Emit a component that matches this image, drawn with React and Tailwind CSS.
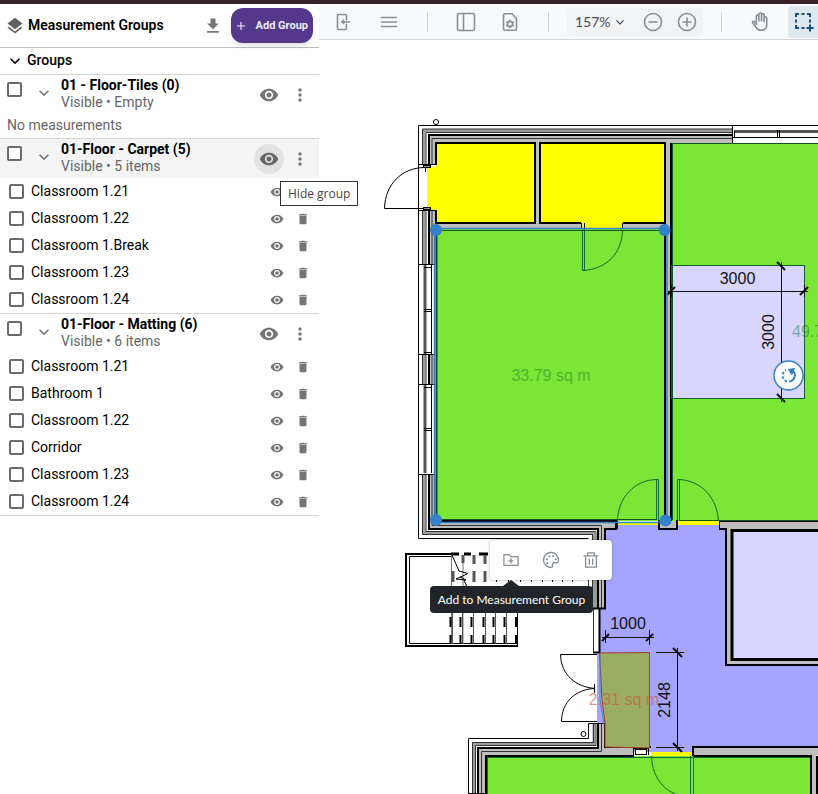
import React, { useState } from 'react';
import {
  MdAdd,
  MdDelete,
  MdExpandMore,
  MdGetApp,
  MdLayers,
  MdMoreVert,
  MdVisibility,
} from 'react-icons/md';

const groups = [
  { id: 'tiles', name: '01 - Floor-Tiles (0)', status: 'Visible • Empty', items: [] },
  {
    id: 'carpet',
    name: '01-Floor - Carpet (5)',
    status: 'Visible • 5 items',
    hovered: true,
    items: ['Classroom 1.21', 'Classroom 1.22', 'Classroom 1.Break', 'Classroom 1.23', 'Classroom 1.24'],
  },
  {
    id: 'matting',
    name: '01-Floor - Matting (6)',
    status: 'Visible • 6 items',
    items: ['Classroom 1.21', 'Bathroom 1', 'Classroom 1.22', 'Corridor', 'Classroom 1.23', 'Classroom 1.24'],
  },
];

const Checkbox = ({ id, label }) => (
  <input
    type="checkbox"
    id={id}
    aria-label={label}
    className="h-[15px] w-[15px] shrink-0 appearance-none rounded-[2px] border-2 border-[#6b6b6b] bg-white checked:bg-[#53388b]"
  />
);

const GroupItem = ({ id, name }) => (
  <li className="flex h-[27px] items-center pr-[9px] pl-[9px]">
    <Checkbox id={id} />
    <label htmlFor={id} className="ml-[7px] flex-1 pb-0.5 text-sm text-black">
      {name}
    </label>
    <div className="flex items-center gap-3 text-[#757575]">
      <button type="button" aria-label={`Hide ${name}`}>
        <MdVisibility size={14} />
      </button>
      <button type="button" aria-label={`Delete ${name}`}>
        <MdDelete size={14} />
      </button>
    </div>
  </li>
);

const Group = ({ group }) => {
  const [open, setOpen] = useState(true);

  return (
    <section className="border-b border-[#d5d5d5]">
      <div
        className={
          group.hovered
            ? 'flex h-[39px] items-start bg-[#f4f4f4] pr-[9px] pl-[7px]'
            : 'flex h-[39px] items-start pr-[9px] pl-[7px]'
        }
      >
        <div className="flex pt-[7px]">
          <Checkbox id={group.id} label={group.name} />
        </div>
        <button
          type="button"
          aria-label="Toggle group"
          onClick={() => setOpen(!open)}
          className="ml-3 pt-2 text-[#757575]"
        >
          <MdExpandMore size={20} />
        </button>
        <div className="ml-[7px] flex-1 pt-0.5 text-sm leading-[17px]">
          <h3 className="font-bold text-black">{group.name}</h3>
          <p className="text-[#666666]">{group.status}</p>
        </div>
        <div className="relative flex items-center gap-1.5 pt-[5px] text-[#757575]">
          <button
            type="button"
            aria-label="Hide group"
            className={
              group.hovered
                ? 'flex h-[30px] w-[30px] items-center justify-center rounded-full bg-[#e2e2e2] text-[#666666]'
                : 'flex h-[30px] w-[30px] items-center justify-center rounded-full'
            }
          >
            <MdVisibility size={20} />
          </button>
          <button type="button" aria-label="Group options">
            <MdMoreVert size={20} />
          </button>
          {group.hovered && (
            <div
              role="tooltip"
              className="absolute top-[42px] left-[26px] z-20 flex h-[25px] items-center border border-[#333333] bg-white px-[7px] font-['Open_Sans',sans-serif] text-xs whitespace-nowrap text-[#444444]"
            >
              Hide group
            </div>
          )}
        </div>
      </div>
      {open && group.items.length === 0 && (
        <p className="h-6 pl-[7px] text-sm leading-[22px] text-[#666666]">No measurements</p>
      )}
      {open && group.items.length > 0 && (
        <ul>
          {group.items.map((item, index) => (
            <GroupItem key={index} id={`${group.id}-${index}`} name={item} />
          ))}
        </ul>
      )}
    </section>
  );
};

const Sidebar = () => (
  <aside className="z-10 w-[319px] shrink-0 bg-white font-['Roboto',sans-serif]">
    <header className="flex h-11 items-center border-b border-[#bdbdbd] pr-1.5 pl-[5px]">
      <MdLayers size={20} className="text-[#616161]" />
      <h1 className="ml-[3px] flex-1 pb-0.5 text-sm font-semibold text-black">Measurement Groups</h1>
      <button type="button" aria-label="Download" className="mr-2 text-[#757575]">
        <MdGetApp size={20} />
      </button>
      <button
        type="button"
        className="flex h-[35px] w-[82px] items-center justify-between rounded-xl bg-[#53388b] pr-[5px] pl-[3px] text-[11px] font-bold whitespace-nowrap text-[#f0ebfa] shadow-md"
      >
        <MdAdd size={14} />
        <span className="pt-px">Add Group</span>
      </button>
    </header>
    <div className="flex h-[27px] items-center border-b border-[#d5d5d5] pl-[5px] text-black">
      <MdExpandMore size={20} />
      <h2 className="ml-0.5 pb-0.5 text-sm font-medium">Groups</h2>
    </div>
    {groups.map((group) => (
      <Group key={group.id} group={group} />
    ))}
  </aside>
);

const Icon = ({ children, size = 24 }) => (
  <svg
    width={size}
    height={size}
    viewBox="0 0 24 24"
    fill="none"
    stroke="currentColor"
    strokeWidth="1.6"
    strokeLinecap="round"
    strokeLinejoin="round"
  >
    {children}
  </svg>
);

const ToolButton = ({ label, children }) => (
  <button type="button" aria-label={label} className="flex h-8 w-8 shrink-0 items-center justify-center">
    {children}
  </button>
);

const Toolbar = () => (
  <div className="flex h-9 shrink-0 items-center overflow-hidden border-b border-[#ced4da] bg-[#f8f9fa] pl-2 text-[#868e96]">
    <div className="flex gap-3.5">
      <ToolButton label="Exit">
        <Icon>
          <path d="M15.500 9.800V5.500a1 1 0 0 0-1-1h-7a1 1 0 0 0-1 1v13a1 1 0 0 0 1 1h7a1 1 0 0 0 1-1v-4.300M18.500 12H11" />
          <path d="M13 9.700v4.600L10.200 12z" fill="currentColor" strokeWidth="0.500" />
        </Icon>
      </ToolButton>
      <ToolButton label="Menu">
        <Icon>
          <path d="M4.500 7.500h15M4.500 12h15M4.500 16.500h15" />
        </Icon>
      </ToolButton>
    </div>
    <div className="mx-[22px] h-5 w-px shrink-0 bg-[#ced4da]" />
    <div className="flex gap-3">
      <ToolButton label="Panels">
        <Icon>
          <rect x="3.500" y="3.500" width="17" height="17" rx="1.500" />
          <path d="M9.500 3.500v17" />
        </Icon>
      </ToolButton>
      <ToolButton label="Document settings">
        <Icon>
          <path d="M14 3.800H7A1.500 1.500 0 0 0 5.500 5.300v13.400A1.500 1.500 0 0 0 7 20.200h10a1.500 1.500 0 0 0 1.500-1.500V8.500z" />
          <circle cx="12" cy="14" r="2.600" />
          <path d="M12 10.400v.6M12 17v.6M8.900 12.200l.5.300M14.600 15.500l.5.300M8.900 15.800l.5-.3M14.600 12.500l.5-.3" />
        </Icon>
      </ToolButton>
    </div>
    <div className="mr-[18px] ml-[22px] h-5 w-px shrink-0 bg-[#ced4da]" />
    <div className="flex h-7 w-[136px] shrink-0 items-center rounded bg-[#f1f3f5] pl-2">
      <button
        type="button"
        className="flex w-[53px] items-center justify-between font-['Lato',sans-serif] text-sm text-[#485056]"
      >
        157%
        <Icon size={16}>
          <path d="m7 10 5 5 5-5" />
        </Icon>
      </button>
      <button type="button" aria-label="Zoom out" className="ml-[13px]">
        <Icon>
          <circle cx="12" cy="12" r="8.500" />
          <path d="M8 12h8" />
        </Icon>
      </button>
      <button type="button" aria-label="Zoom in" className="ml-2.5">
        <Icon>
          <circle cx="12" cy="12" r="8.500" />
          <path d="M8 12h8M12 8v8" />
        </Icon>
      </button>
    </div>
    <div className="mr-[22px] ml-[18px] h-5 w-px shrink-0 bg-[#ced4da]" />
    <div className="flex gap-3">
      <ToolButton label="Pan">
        <Icon>
          <path d="M8.300 14.500V6.400a1.300 1.300 0 0 1 2.600 0V11M10.900 11V4.300a1.300 1.300 0 0 1 2.600 0V11M13.500 11V4.900a1.300 1.300 0 0 1 2.600 0V11.500M16.100 8a1.300 1.300 0 0 1 2.600 0v6.500c0 3.500-2.200 5.800-5.500 5.800-2.600 0-4-1-5.300-3l-3.200-4.500c-.6-1 .8-2 1.700-1.200l1.900 2" />
        </Icon>
      </ToolButton>
      <button
        type="button"
        aria-label="Select area"
        className="flex h-8 w-10 shrink-0 items-center rounded bg-[#dde7ee] pl-1 text-[#1d4e79]"
      >
        <Icon>
          <path
            strokeWidth="2"
            strokeLinecap="butt"
            d="M4 7V4h3M9.500 4h3M15 4h3v3M18 9.500v3M4 9.500v3M4 15v3h3M9.500 18h3M18 14.500v7M14.500 18h7"
          />
        </Icon>
      </button>
    </div>
  </div>
);

// stair treads below the landing
const treads = [452, 462, 473, 485, 495, 506];

const FloorPlan = () => (
  <svg className="block h-full w-full" role="img" aria-label="Floor plan">
    <g transform="translate(-319 -40)" fill="none" stroke="#000">
      {/* corridor and rooms */}
      <g stroke="none">
        <path d="M606 525H830V752H606V723H597V652H600V609H606Z" fill="#a5a5ff" />
        <path d="M427 167H436V143H535V223H436V210H427Z" fill="#ffff00" />
        <path d="M541 143H665V223H623V229H581V223H541Z" fill="#ffff00" />
        <rect x="436" y="229" width="229" height="292" fill="#7ae635" />
        <rect x="671" y="143" width="159" height="378" fill="#7ae635" />
        <rect x="733" y="531" width="97" height="128" fill="#d8d6ff" />
        <rect x="486" y="756" width="325" height="60" fill="#7ae635" />
        <rect x="617" y="522" width="42" height="3" fill="#ffff00" />
        <rect x="678" y="521" width="41" height="4" fill="#ffff00" />
        <rect x="651" y="752" width="42" height="4" fill="#ffff00" />
      </g>

      {/* wall bodies */}
      <g stroke="none" fill="#bebebe">
        <path d="M428 134H732V143H436V165H428Z" />
        <rect x="428" y="210" width="8" height="54" />
        <rect x="428" y="355" width="6" height="29" />
        <path d="M428 474H436V522H617V529H606V608H598V529H428Z" />
        <rect x="535" y="143" width="6" height="81" />
        <path d="M436 224H581V228H436ZM623 224H665V228H623Z" />
        <rect x="665" y="143" width="6" height="378" />
        <rect x="659" y="521" width="18" height="8" />
        <path d="M719 521H830V530H732V659H830V665H726V530H719Z" />
        <path d="M598 723H606V748H633V755H486V816H478V748H598Z" />
        <rect x="693" y="748" width="137" height="7" />
        <rect x="811" y="755" width="6" height="60" />
      </g>
      <g stroke="#9c9c9c" strokeWidth="3">
        <path d="M732 130.500H424V165M424 210V264M424 355V384M424 474V533H593.500V608" />
        <path d="M594 723V743.500H474V816" />
      </g>

      {/* outer wall outlines */}
      <path d="M830 125.500H418.500V538.500H588.500" />
      <g stroke="#333">
        <path d="M732 129H422.500V165M422.500 210V264M422.500 355V384M422.500 474V534.500H592.500V608" />
        <path d="M732 132.500H426V165M426 210V264M426 355V384M426 474V531.500H596V608" />
        <path d="M732 138.500H432V165M432 210V264M432 355V384M432 474V525.500H601.500V608" />
        <path d="M588.500 540V608M593.500 609V653" />
        <path d="M593.500 723V742.500H472.500V816M596 723V745.500H475.500V816M601.500 723V751.500H481.500V816" />
      </g>
      <path d="M606 723.500H588.500V738.500H468.500V816M468 793.500H486" />
      <g strokeWidth="2">
        <path d="M732 135H429V165M429 210V264M429 355V384M429 474V529H598V608" />
        <path d="M436 165V143H535V223H436V210" />
        <path d="M581 223H540V143H665V223H623" />
        <path d="M671 521V143M665 223V521" />
        <path d="M605 608V529H616V521H436" />
        <path d="M659 520V529H677V520" />
        <path d="M598 723V748H478V816" />
        <path d="M605 723V747H651M486 816V756H634M693 756V747H830" />
        <path d="M811 816V756H693M817 816V756" />
      </g>
      <path d="M719 521H830M719 529H726V665H830" strokeWidth="2" />
      <path d="M830 659.500H732V530.500H830" strokeWidth="3" />
      <path d="M581.500 223V229M584.500 223V229M622.500 223V229M617.500 521V529M719.500 521V529M418 164.500H436M418 210.500H436" />
      <path d="M593 608.500H606M599.500 609V653M593 652.500H600" strokeWidth="2" />
      <path d="M633.500 748V755M648.500 748V755M634 748.500H648" />
      <rect x="635.500" y="749.500" width="11" height="5" fill="#fff" />

      {/* windows */}
      <path d="M425 265V354M425 385V473" stroke="#555" strokeWidth="3" />
      <path d="M734 131.500H830" stroke="#555" strokeWidth="3" />
      <path d="M431.500 265V354M431.500 385V473M418 264.500H434M418 354.500H434M418 384.500H434M418 474.500H434" />
      <path d="M424 309.500H431M424 311.500H431M424 428.500H431M424 430.500H431M424 267.500H431M424 352.500H431M424 387.500H431" />
      <path d="M732 137.500H830M732.500 125V143M734.500 131V138M777.500 130V138M779.500 130V138" />

      {/* exterior door and its frame */}
      <path d="M424 167.500C402 168 385 184 384.500 208.500H424M425.500 168V172" />
      <rect x="423.500" y="165.500" width="7" height="2" fill="#999" />
      <rect x="423.500" y="207.500" width="7" height="2" fill="#999" />
      <circle cx="436" cy="122" r="2.500" />
      <circle cx="583.500" cy="734" r="2.500" />

      {/* double door */}
      <path d="M597 654.500H560.500C561 675 576 687 595 688.500C576 689 561.500 702 561.500 721.500H597M594.500 684V693" />

      {/* right hand lavender mat */}
      <rect x="671.500" y="265.500" width="133" height="133" fill="#d8d6ff" stroke="#175e32" />

      {/* internal doors */}
      <g stroke="#0d6b34">
        <path d="M582.500 229V270.500H584.500V229M583 270.500C607 269 622 253 622.500 230" />
        <path d="M658.500 520V479.500H656.500V520M656.500 479.500C634 480 618 498 617.500 521" />
        <path d="M677.500 520V479.500H679.500V520M679.500 479.500C702 481 717 498 718.500 521" />
        <path d="M693.500 756V816M690.500 756V816M651.500 756C652 780 668 797 691 797" />
        <path d="M437 230.500H664M672.500 144V520M672 143.500H830M679 520.500H830M437 519.500H657" stroke="#125223" />
        <path d="M487.500 816V757.500H810" />
      </g>

      {/* stairs */}
      <path d="M451 554H406V646H518" strokeWidth="2" />
      <path d="M452 556.500H409.500V643.500H518M517.500 612V647" />
      <path d="M451 554H459M464 554H471M479 554H488" strokeWidth="3" />
      <path d="M451.500 555V644M463 555V644" stroke="#777" />
      <path
        d="M453 571V582M463 555V563M474 555V564M474 571V582M485 555V564M485 571V582"
        stroke="#555"
        strokeWidth="3"
      />
      <path d="M452 555L459 571L468 573.500L456 579L466 580L460 577M464 580L467 587" />
      <path d="M496.500 578V582M508.500 578V582M520.500 578V582M531.500 578V582M542.500 578V582M552.500 578V582M562.500 578V582M572.500 578V582" />
      {treads.map((x) => (
        <g key={x}>
          <path d={`M${x + 0.5} 612V644`} stroke="#555" />
          <path d={`M${x - 1.5} 617V627M${x - 1.5} 635V643`} strokeWidth="2" />
        </g>
      ))}
      <path d="M516 617V627M516 635V643" strokeWidth="2" />

      {/* doormat at the entrance */}
      <path d="M599.500 653L649.500 652.500V748L605 747V723L602 700Z" fill="#9bad62" stroke="#a5382b" />
      <path d="M600 654V700L604 724" stroke="#4a84a8" />
      <path d="M649.500 654V747" stroke="#33705c" />

      {/* dimension lines */}
      <g stroke="#111">
        <path d="M668 291.500H808M781.500 262V402" />
        <path d="M667 295L675 287M800 295L808 287M777 262L785 270M777 394L785 402" strokeWidth="2" />
        <path d="M671.500 285V297M804.500 285V297" />
        <path d="M602 637.500H654M605.500 630V643M649.500 630V645M677.500 648V751M656 652.500H684M656 747.500H684" />
        <path d="M602 641L609 634M646 641L653 634M673 648L682 657M673 743L682 752" strokeWidth="2" />
      </g>
      <g
        stroke="none"
        fill="#111"
        textAnchor="middle"
        className="font-['Liberation_Sans',sans-serif] text-base"
      >
        <text x="737.500" y="284">3000</text>
        <text transform="translate(774 332) rotate(-90)">3000</text>
        <text x="628" y="629">1000</text>
        <text transform="translate(670 700) rotate(-90)">2148</text>
        <text x="551" y="381" fill="#14822880">33.79 sq m</text>
        <text x="792" y="337" textAnchor="start" fill="#14822880">49.79 sq m</text>
        <text x="624" y="705" fill="#d0503f99">2.31 sq m</text>
      </g>

      {/* selected area with its handles */}
      <path d="M434.500 230V520M436 228.500H665M436 522.500H666M667 230V520" stroke="#3381c8" strokeWidth="1.500" />
      <path d="M436.500 231V519" stroke="#0b4a30" strokeWidth="2" />
      <g fill="#3381c8" stroke="none">
        <circle cx="436" cy="230" r="6" />
        <circle cx="664.500" cy="230" r="6" />
        <circle cx="436" cy="520" r="6" />
        <circle cx="665.500" cy="520.500" r="6" />
      </g>
      <circle cx="788.500" cy="375.500" r="14.500" fill="#fff" stroke="#3381c8" strokeWidth="1.500" />
      <g stroke="#3381c8" strokeWidth="2">
        <path d="M792.500 370.500A6.200 6.200 0 0 1 789 381.500" />
        <path d="M787 381.500A6.200 6.200 0 0 1 786 370" strokeDasharray="2.500 2" />
        <path d="M795 368.500L788.500 369.500L792 375" fill="#3381c8" strokeWidth="1" />
      </g>
    </g>
  </svg>
);

const SelectionPopup = () => (
  <div className="absolute top-[500px] left-[171px] flex h-10 w-[122px] items-center justify-between rounded bg-white px-[11px] text-[#868e96] shadow-[0_0_3px_rgba(0,0,0,0.35)]">
    <button type="button" aria-label="Add to Measurement Group">
      <Icon size={20}>
        <path d="M3.500 18.500V5.500h6l2 2.500h9v10.500zM12 10.500v5M9.500 13h5" />
      </Icon>
    </button>
    <button type="button" aria-label="Style">
      <Icon size={20}>
        <path d="M12 3a9 9 0 1 0 0 18c1.500 0 2-1 1.800-2.200-.3-1.500-.4-3.300 1.700-3.600 2-.2 3.500.8 4.700-.4C21.800 13 20.500 3 12 3z" />
        <path d="M10 7.500h.1M14.500 7.500h.1M7 11h.1M7.500 15.500h.1M17.500 11h.1" strokeWidth="2.500" />
      </Icon>
    </button>
    <button type="button" aria-label="Delete">
      <Icon size={20}>
        <path d="M3.500 7h17M8 7V3.500h8V7M5.500 7v13.500h13V7M10 11v6M14 11v6" />
      </Icon>
    </button>
    <div
      role="tooltip"
      className="absolute top-[46px] -left-[60px] flex h-[27px] w-[163px] items-center justify-center rounded bg-[#212529] font-['Lato',sans-serif] text-xs whitespace-nowrap text-white"
    >
      Add to Measurement Group
      <span className="absolute -top-1.5 left-[73px] border-x-8 border-b-[6px] border-x-transparent border-b-[#212529]" />
    </div>
  </div>
);

const App = () => {
  return (
    <div className="flex h-screen flex-col overflow-hidden bg-white">
      <div className="h-1 shrink-0 bg-[#3a2028]" />
      <div className="flex min-h-0 flex-1">
        <Sidebar />
        <main className="flex min-w-0 flex-1 flex-col">
          <Toolbar />
          <div className="relative min-h-0 flex-1 overflow-hidden">
            <FloorPlan />
            <SelectionPopup />
          </div>
        </main>
      </div>
    </div>
  );
};

export default App;
